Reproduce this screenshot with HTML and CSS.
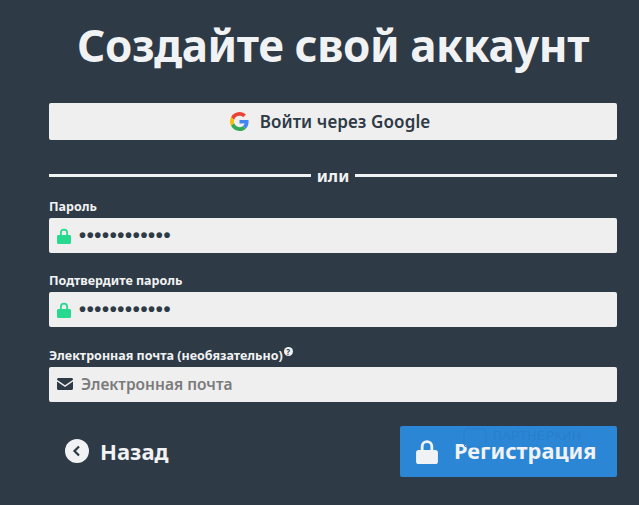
FILE: index.html
```html
<!DOCTYPE html>
<html lang="ru">
<head>
  <meta charset="UTF-8" />
  <title>Создайте свой аккаунт</title>
  <link rel="stylesheet" href="styles.css">
</head>
<body>
  <div class="container">
    <h1 class="title">Создайте свой аккаунт</h1>

    <a href="#" class="google-button">
      <svg class="google-icon" viewBox="0 0 48 48" width="19" height="19">
        <path fill="#EA4335" d="M24 9.500c3.500 0 6.700 1.200 9.200 3.600l6.900-6.900C35.900 2.400 30.500 0 24 0 14.600 0 6.500 5.400 2.600 13.200l8 6.200C12.500 13.600 17.800 9.500 24 9.500z"/>
        <path fill="#4285F4" d="M46.900 24.500c0-1.600-.1-3.100-.4-4.500H24v9h12.900c-.6 3-2.200 5.500-4.700 7.200l7.700 6c4.500-4.200 7-10.300 7-17.700z"/>
        <path fill="#FBBC05" d="M10.500 28.600c-.5-1.400-.8-3-.8-4.600s.3-3.200.8-4.600l-8-6.200C.9 16.500 0 20.100 0 24s.9 7.500 2.600 10.800l7.900-6.200z"/>
        <path fill="#34A853" d="M24 48c6.500 0 11.900-2.100 15.900-5.800l-7.700-6c-2.200 1.400-4.900 2.300-8.200 2.300-6.200 0-11.500-4.200-13.400-9.900l-8 6.200C6.500 42.600 14.600 48 24 48z"/>
      </svg>
      <span>Войти через Google</span>
    </a>

    <div class="divider"><span>или</span></div>

    <form class="signup-form">
      <label class="field-label">Пароль</label>
      <div class="field">
        <svg class="field-icon lock-green" viewBox="0 0 14 16" width="14" height="16"><path d="M3 7V4.800a4 4 0 0 1 8 0V7h1.500c.8 0 1.500.7 1.500 1.500v6c0 .8-.7 1.500-1.500 1.500h-11C.7 16 0 15.300 0 14.500v-6C0 7.700.7 7 1.500 7H3zm1.800 0h4.400V4.800a2.200 2.200 0 0 0-4.400 0V7z"/></svg>
        <span class="dots">••••••••••••</span>
      </div>

      <label class="field-label">Подтвердите пароль</label>
      <div class="field">
        <svg class="field-icon lock-green" viewBox="0 0 14 16" width="14" height="16"><path d="M3 7V4.800a4 4 0 0 1 8 0V7h1.500c.8 0 1.500.7 1.500 1.500v6c0 .8-.7 1.500-1.500 1.500h-11C.7 16 0 15.300 0 14.500v-6C0 7.700.7 7 1.500 7H3zm1.800 0h4.400V4.800a2.200 2.200 0 0 0-4.400 0V7z"/></svg>
        <span class="dots">••••••••••••</span>
      </div>

      <label class="field-label">Электронная почта (необязательно)<span class="hint">?</span></label>
      <div class="field">
        <svg class="field-icon" viewBox="0 0 16 12" width="16" height="12"><path fill="#2e3a45" d="M1.500 0h13c.8 0 1.500.7 1.500 1.500v.3L8 7.200 0 1.800v-.3C0 .7.7 0 1.500 0z"/><path fill="#2e3a45" d="M0 3.600l8 5.300 8-5.300v6.900c0 .8-.7 1.500-1.500 1.500h-13C.7 12 0 11.300 0 10.500z"/></svg>
        <span class="placeholder">Электронная почта</span>
      </div>

      <div class="actions">
        <a href="#" class="back-link">
          <svg viewBox="0 0 24 24" width="24" height="24"><circle cx="12" cy="12" r="12" fill="#f1f2f4"/><path d="M14 7.500 9.500 12l4.500 4.500" fill="none" stroke="#2e3a45" stroke-width="2.200"/></svg>
          <span>Назад</span>
        </a>
        <button type="button" class="submit-button">
          <svg viewBox="0 0 14 16" width="22" height="25"><path fill="#f1f2f4" d="M3 7V4.800a4 4 0 0 1 8 0V7h1.500c.8 0 1.500.7 1.500 1.500v6c0 .8-.7 1.500-1.500 1.500h-11C.7 16 0 15.300 0 14.500v-6C0 7.700.7 7 1.500 7H3zm1.800 0h4.400V4.800a2.200 2.200 0 0 0-4.400 0V7z"/></svg>
          <span>Регистрация</span>
          <svg class="watermark-icon" viewBox="0 0 24 20" width="24" height="20"><rect x="1" y="1" width="22" height="18" rx="3" fill="none" stroke="#2a7dc7"/></svg>
          <span class="watermark">ПАРТНЕРКИН</span>
        </button>
      </div>
    </form>
  </div>
</body>
</html>
```

FILE: styles.css
```css
* {
  box-sizing: border-box;
  margin: 0;
  padding: 0;
}

html, body {
  height: 100%;
  background: #2e3a45;
  font-family: 'Noto Sans', sans-serif;
  overflow: hidden;
}

.container {
  width: 568px;
  margin-left: 49px;
  padding-top: 18px;
}

.title {
  font-size: 44px;
  line-height: 55px;
  font-weight: 700;
  letter-spacing: -0.400px;
  color: #f1f2f4;
  text-align: center;
  white-space: nowrap;
  margin-bottom: 30px;
}

.google-button {
  display: flex;
  justify-content: center;
  align-items: center;
  gap: 11px;
  height: 37px;
  padding-right: 6px;
  background: #efefef;
  border-radius: 2px;
  color: #2e3a45;
  font-size: 17px;
  font-weight: 600;
  letter-spacing: 0.100px;
  text-decoration: none;
}

.divider {
  display: flex;
  align-items: center;
  gap: 6px;
  height: 20px;
  margin-top: 25px;
  color: #f1f2f4;
  font-size: 16.500px;
  font-weight: 700;
}

.divider::before,
.divider::after {
  content: "";
  flex: 1;
  height: 3px;
  background: #f1f2f4;
}

.signup-form {
  margin-top: 12px;
}

.field-label {
  display: block;
  height: 17px;
  color: #f1f2f4;
  font-size: 12.500px;
  line-height: 19px;
  font-weight: 700;
  white-space: nowrap;
}

.hint {
  display: inline-block;
  width: 9px;
  height: 9px;
  margin-left: 1px;
  border-radius: 50%;
  background: #f1f2f4;
  color: #2e3a45;
  font-size: 8px;
  line-height: 9px;
  text-align: center;
  vertical-align: 5px;
}

.field {
  display: flex;
  align-items: center;
  height: 35px;
  margin-top: 4px;
  margin-bottom: 18.400px;
  padding-left: 8px;
  background: #efefef;
  border-radius: 2px;
}

.field-icon {
  flex: none;
  margin-right: 8px;
}

.lock-green {
  fill: #26d98f;
}

.dots {
  color: #2e3a45;
  font-family: 'Liberation Sans', sans-serif;
  font-size: 20px;
  font-weight: 700;
  letter-spacing: 0.670px;
}

.placeholder {
  color: #7b7b7b;
  font-size: 15.500px;
  font-weight: 600;
}

.actions {
  display: flex;
  justify-content: space-between;
  align-items: center;
  margin-top: 24.200px;
}

.back-link {
  display: flex;
  align-items: center;
  gap: 11px;
  margin-left: 16px;
  color: #f1f2f4;
  font-size: 22px;
  font-weight: 700;
  text-decoration: none;
}

.submit-button {
  position: relative;
  display: flex;
  align-items: center;
  gap: 16px;
  width: 217px;
  height: 51px;
  padding-left: 16px;
  border: none;
  border-radius: 2px;
  background: #2b86d6;
  color: #f1f2f4;
  font-family: inherit;
  font-size: 21.800px;
  line-height: 22px;
  font-weight: 700;
}

/* faint stock-site stamp across the button */
.watermark-icon {
  position: absolute;
  top: 2px;
  left: 63px;
}

.watermark {
  position: absolute;
  top: 5px;
  left: 93px;
  color: #2a7dc7;
  font-family: 'Liberation Sans', sans-serif;
  font-size: 12px;
  line-height: 11px;
  font-weight: 400;
  letter-spacing: 0.800px;
  white-space: nowrap;
}
```
